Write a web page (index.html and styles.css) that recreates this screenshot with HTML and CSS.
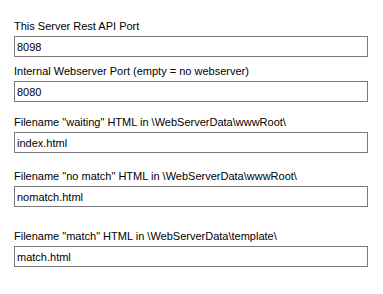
FILE: index.html
```html
<!DOCTYPE html>
<html lang="en">
<head>
    <meta charset="UTF-8">
    <title>Webserver Settings</title>
    <link rel="stylesheet" href="styles.css">
</head>
<body>
    <div class="settings">
        <div class="field">
            <label for="apiPort">This Server Rest API Port</label>
            <input id="apiPort" type="text" value="8098">
        </div>
        <div class="field field-2">
            <label for="webPort">Internal Webserver Port (empty = no webserver)</label>
            <input id="webPort" type="text" value="8080">
        </div>
        <div class="field field-3">
            <label for="waitingFile">Filename "waiting" HTML in \WebServerData\wwwRoot\</label>
            <input id="waitingFile" type="text" value="index.html">
        </div>
        <div class="field field-4">
            <label for="nomatchFile">Filename "no match" HTML in \WebServerData\wwwRoot\</label>
            <input id="nomatchFile" type="text" value="nomatch.html">
        </div>
        <div class="field field-5">
            <label for="matchFile">Filename "match" HTML in \WebServerData\template\</label>
            <input id="matchFile" type="text" value="match.html">
        </div>
    </div>
</body>
</html>
```

FILE: styles.css
```css
body {
    margin: 0;
    background-color: #fff;
    font-family: Tahoma, "Liberation Sans", sans-serif;
    font-size: 11px;
    color: #000;
}

.settings {
    display: flex;
    flex-direction: column;
    padding: 20px 16px 0 14px;
}

.field {
    display: flex;
    flex-direction: column;
    gap: 3px;
}

.field-2 {
    margin-top: 8px;
}

.field-3 {
    margin-top: 14px;
}

.field-4 {
    margin-top: 17px;
}

.field-5 {
    margin-top: 23px;
}

.field label {
    display: block;
    height: 13px;
    line-height: 13px;
}

.field input {
    box-sizing: border-box;
    width: 354px;
    height: 21px;
    margin: 0;
    padding: 0 2px;
    border: 1px solid #7a7a7a;
    font-family: inherit;
    font-size: 11px;
    color: #000;
    background-color: #fff;
    outline: none;
}
```
